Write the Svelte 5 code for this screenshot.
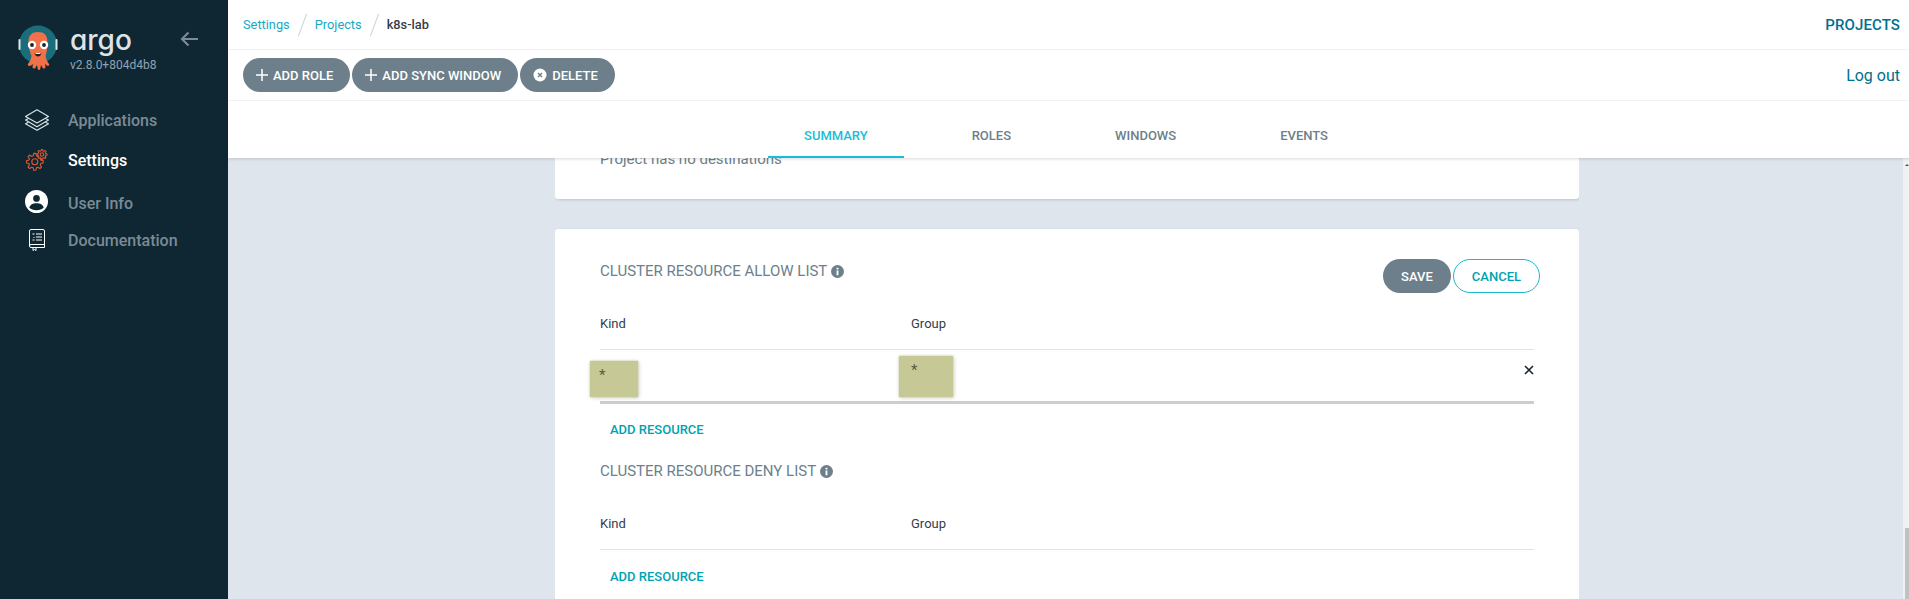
<script lang="ts">
  const menu = [
    { label: 'Applications', icon: 'layers' },
    { label: 'Settings', icon: 'gears', active: true },
    { label: 'User Info', icon: 'user' },
    { label: 'Documentation', icon: 'book' },
  ];
  const tabs = ['Summary', 'Roles', 'Windows', 'Events'];

  // Outline of a cog, so both gears of the settings icon share one shape.
  function cog(cx: number, cy: number, outer: number, inner: number, teeth: number): string {
    const pts: string[] = [];
    const step = (Math.PI * 2) / teeth;
    for (let i = 0; i < teeth; i++) {
      const a = i * step - Math.PI / 2;
      const corners: [number, number][] = [
        [inner, a - step * 0.34],
        [outer, a - step * 0.16],
        [outer, a + step * 0.16],
        [inner, a + step * 0.34],
      ];
      for (const [r, t] of corners) {
        pts.push(`${(cx + r * Math.cos(t)).toFixed(2)} ${(cy + r * Math.sin(t)).toFixed(2)}`);
      }
    }
    return 'M' + pts.join('L') + 'z';
  }
</script>

<div class="page">
  <aside class="sidebar">
    <div class="brand">
      <svg class="logo" viewBox="0 0 40 50" width="40" height="50" aria-hidden="true">
        <circle cx="20" cy="19.500" r="19" fill="#1b6d7c" />
        <rect x="0.500" y="14" width="2" height="11" rx="1" fill="#dfe7ea" />
        <rect x="37.500" y="14" width="2" height="11" rx="1" fill="#dfe7ea" />
        <path d="M10.500 17C10.500 10 14 7 20 7s9.500 3 9.500 10c0 7-1 11-2 14 .5 3 2 6 3.500 8 .8 1.500-.7 2.500-2.200 1.500l-1.800-1.500.5 3c0 1.500-1.800 2-2.800 1l-1.700-3-.8 4c-.4 1.200-2 1.200-2.400 0l-.8-4-1.700 3c-1 1-2.800.5-2.800-1l.5-3-1.800 1.500C10.700 41.500 9.200 40.500 10 39c1.500-2 3-5 3.500-8-1-3-3-7-3-14z" fill="#f0714a" />
        <circle cx="14" cy="20" r="4.200" fill="#fff" />
        <circle cx="26" cy="20" r="4.200" fill="#fff" />
        <circle cx="14" cy="20" r="1.900" fill="#16232b" />
        <circle cx="26" cy="20" r="1.900" fill="#16232b" />
        <path d="M16.500 28h7c-.5 2.500-2 3.500-3.500 3.500s-3-1-3.500-3.500z" fill="#16232b" />
        <path d="M17.500 28h5v1h-5z" fill="#fff" />
      </svg>
      <div class="brand-text">
        <div class="wordmark">argo</div>
        <div class="version">v2.8.0+804d4b8</div>
      </div>
      <svg class="collapse" viewBox="0 0 18 16" width="18" height="16" fill="none" stroke="#7b8b95" stroke-width="2.200" aria-hidden="true">
        <path d="M18 8H2M8.500 1.500 2 8l6.500 6.500" />
      </svg>
    </div>

    <nav class="menu">
      {#each menu as item}
        <div class="menu-item item-{item.icon}" class:active={item.active}>
          <span class="menu-icon">
            {#if item.icon === 'layers'}
              <svg viewBox="0 0 24 22" width="24" height="22" fill="none" stroke="#dbe5ea" stroke-width="1.100" stroke-linejoin="round" aria-hidden="true">
                <path d="M12 .8 23.500 7.500 12 14 .5 7.500z" />
                <path d="M3.500 9.500 .5 11 12 17.800 23.500 11 20.500 9.500" />
                <path d="M3.500 13.200 .5 14.700 12 21.300 23.500 14.700 20.500 13.200" />
              </svg>
            {:else if item.icon === 'gears'}
              <svg viewBox="0 0 22 22" width="22" height="22" fill="none" stroke="#e2572f" stroke-width="1.100" stroke-linejoin="round" aria-hidden="true">
                <path d={cog(8.800, 12.800, 8.500, 6.200, 8)} />
                <circle cx="8.800" cy="12.800" r="3" />
                <path d={cog(16, 5.500, 5, 3.700, 8)} fill="#0f2733" />
                <circle cx="16" cy="5.500" r="1.700" />
              </svg>
            {:else if item.icon === 'user'}
              <svg class="user-icon" viewBox="0 0 24 24" width="23" height="23" aria-hidden="true">
                <circle cx="12" cy="12" r="12" fill="#fff" />
                <circle cx="12" cy="8.800" r="3.500" fill="#0f2733" />
                <path d="M4.500 18.500c.5-3.500 4-4.800 7.500-4.800s7 1.300 7.500 4.800c-1.800 1.700-4.200 2.500-7.500 2.500s-5.700-.8-7.500-2.500z" fill="#0f2733" />
              </svg>
            {:else}
              <svg viewBox="0 0 16 22" width="16" height="22" fill="none" stroke="#fff" stroke-width="1" aria-hidden="true">
                <path d="M2 .5h12A1.500 1.500 0 0 1 15.500 2v16.500H2A1.500 1.500 0 0 1 .5 17V2A1.500 1.500 0 0 1 2 .5z" />
                <path d="M.5 17A1.500 1.500 0 0 1 2 15.500h13.500" />
                <path d="M7 5h6M7 8h6M7 11h6M3.500 5h2M4.500 8.500h1M3.500 11h2" />
                <path d="M4 18.500v3l1.500-1 1.500 1v-3" />
              </svg>
            {/if}
          </span>
          <span class="menu-label">{item.label}</span>
        </div>
      {/each}
    </nav>
  </aside>

  <main class="main">
    <header class="header">
      <div class="crumbs-row">
        <div class="crumbs">
          <a href="#settings">Settings</a>
          <i class="sep"></i>
          <a href="#projects">Projects</a>
          <i class="sep"></i>
          <span class="current">k8s-lab</span>
        </div>
        <span class="title">PROJECTS</span>
      </div>
      <div class="tools-row">
        <div class="tools">
          <button class="btn">
            <svg viewBox="0 0 12 12" width="12" height="12" stroke="#fff" stroke-width="1.500" aria-hidden="true"><path d="M6 0v12M0 6h12" /></svg>
            ADD ROLE
          </button>
          <button class="btn">
            <svg viewBox="0 0 12 12" width="12" height="12" stroke="#fff" stroke-width="1.500" aria-hidden="true"><path d="M6 0v12M0 6h12" /></svg>
            ADD SYNC WINDOW
          </button>
          <button class="btn">
            <svg viewBox="0 0 14 14" width="14" height="14" aria-hidden="true">
              <circle cx="7" cy="7" r="6.500" fill="#fff" />
              <path d="M5 5l4 4M9 5l-4 4" stroke="#6d7f8b" stroke-width="1.400" />
            </svg>
            DELETE
          </button>
        </div>
        <a class="logout" href="#logout">Log out</a>
      </div>
      <div class="tabs">
        {#each tabs as tab, i}
          <div class="tab" class:selected={i === 0}>{tab.toUpperCase()}</div>
        {/each}
      </div>
    </header>

    <div class="content">
      <section class="card card-clipped">
        <p class="empty">Project has no destinations</p>
      </section>

      <section class="card">
        <div class="card-head">
          <h4>CLUSTER RESOURCE ALLOW LIST <svg class="info" viewBox="0 0 14 14" width="13" height="13" aria-hidden="true"><circle cx="7" cy="7" r="7" fill="#6d7f8b" /><path d="M7 3v1.800M7 6v5" stroke="#fff" stroke-width="2" /></svg></h4>
          <div class="card-actions">
            <button class="btn btn-save">SAVE</button>
            <button class="btn btn-outline">CANCEL</button>
          </div>
        </div>
        <div class="cols cols-head"><span>Kind</span><span>Group</span></div>
        <div class="cols cols-edit">
          <span class="mark mark-kind">*</span>
          <span class="mark mark-group">*</span>
          <svg class="remove" viewBox="0 0 10 10" width="10" height="10" stroke="#16232b" stroke-width="1.600" aria-hidden="true"><path d="M1 1l8 8M9 1l-8 8" /></svg>
        </div>
        <button class="add">ADD RESOURCE</button>

        <h4 class="second">CLUSTER RESOURCE DENY LIST <svg class="info" viewBox="0 0 14 14" width="13" height="13" aria-hidden="true"><circle cx="7" cy="7" r="7" fill="#6d7f8b" /><path d="M7 3v1.800M7 6v5" stroke="#fff" stroke-width="2" /></svg></h4>
        <div class="cols cols-head"><span>Kind</span><span>Group</span></div>
        <button class="add">ADD RESOURCE</button>
      </section>
    </div>

    <div class="scrollbar"><span class="arrow"></span><span class="thumb"></span></div>
  </main>
</div>

<style>
  :global(body) {
    margin: 0;
    overflow: hidden;
    font-family: Roboto, 'Liberation Sans', sans-serif;
  }

  .page {
    display: flex;
    width: 1909px;
    height: 599px;
    overflow: hidden;
    background: #dee5ec;
  }

  .sidebar {
    flex: none;
    width: 228px;
    background: #0f2733;
    box-sizing: border-box;
    padding-top: 25px;
  }

  .brand {
    display: flex;
    align-items: flex-start;
    padding-left: 18px;
    height: 76px;
  }
  .logo {
    flex: none;
  }
  .brand-text {
    margin-left: 12px;
    width: 110px;
  }
  .wordmark {
    font-family: Inter, 'Open Sans', sans-serif;
    font-feature-settings: 'cv11' 1;
    font-size: 28px;
    font-weight: 500;
    line-height: 30px;
    color: #dfe3e6;
  }
  .version {
    margin-top: 2px;
    font-size: 12px;
    line-height: 16px;
    color: #8fa4b1;
  }
  .collapse {
    margin-top: 6px;
  }

  .menu {
    margin-top: -1px;
  }
  .menu-item {
    display: flex;
    align-items: center;
    height: 40px;
    color: #7b8b95;
    font-size: 16px;
    font-weight: 500;
  }
  .menu-item.active {
    color: #fff;
  }
  .item-user {
    margin-top: 3px;
  }
  .item-book {
    height: 34px;
  }
  .user-icon {
    margin-top: -4px;
  }
  .menu-icon {
    flex: none;
    width: 68px;
    display: flex;
    justify-content: center;
    padding-left: 5px;
    box-sizing: border-box;
  }

  .main {
    position: relative;
    flex: 1;
    min-width: 0;
    display: flex;
    flex-direction: column;
  }

  .header {
    position: relative;
    z-index: 2;
    flex: none;
    background: #fff;
    box-shadow: 1px 1px 3px rgba(0, 0, 0, 0.15);
  }
  .crumbs-row {
    display: flex;
    align-items: center;
    justify-content: space-between;
    height: 49px;
    padding: 0 9px 0 15px;
    border-bottom: 1px solid #eff3f5;
  }
  .crumbs {
    display: flex;
    align-items: center;
    font-size: 12.800px;
  }
  .crumbs a {
    color: #18a9c4;
    text-decoration: none;
  }
  .current {
    color: #363c4a;
    font-weight: 500;
  }
  .sep {
    width: 1px;
    height: 24px;
    margin: 0 12px;
    background: #ccd6dd;
    transform: rotate(20deg);
  }
  .title {
    color: #00708e;
    font-size: 15px;
    font-weight: 500;
    letter-spacing: 0.1px;
  }
  .tools-row {
    display: flex;
    align-items: center;
    justify-content: space-between;
    height: 50px;
    padding: 0 9px 0 15px;
    border-bottom: 1px solid #eff3f5;
  }
  .tools {
    display: flex;
    gap: 2px;
  }
  .logout {
    color: #00708e;
    font-size: 16px;
    text-decoration: none;
  }

  .btn {
    display: inline-flex;
    align-items: center;
    gap: 5px;
    height: 34px;
    padding: 0 17px 0 13px;
    border: 0;
    border-radius: 17px;
    background: #6d7f8b;
    color: #fff;
    font: 500 13px Roboto, sans-serif;
    cursor: pointer;
  }
  .btn-save {
    padding: 0 18px;
  }
  .btn-outline {
    padding: 0 18px;
    background: #fff;
    border: 1px solid #1ab8cf;
    color: #00a2b3;
  }

  .tabs {
    display: flex;
    justify-content: center;
    gap: 32px;
    height: 57px;
    padding-right: 5px;
  }
  .tab {
    box-sizing: border-box;
    padding: 27px 36px 0;
    text-align: center;
    color: #6d7f8b;
    font-size: 13px;
    font-weight: 500;
  }
  .tab.selected {
    color: #18bed4;
    border-bottom: 2px solid #18bed4;
  }

  .content {
    flex: 1;
    min-height: 0;
    width: 1024px;
    margin-left: 327px;
    overflow: hidden;
  }
  .card {
    position: relative;
    box-sizing: border-box;
    background: #fff;
    border-radius: 3px;
    box-shadow: 1px 1px 3px rgba(0, 0, 0, 0.15);
    padding: 28px 45px 0 45px;
    margin-bottom: 30px;
    height: 400px;
  }
  .card-clipped {
    height: 41px;
    padding-top: 0;
    border-radius: 0 0 3px 3px;
    overflow: hidden;
  }
  .empty {
    margin: -8px 0 0;
    color: #6d7f8b;
    font-size: 15px;
    line-height: 18px;
  }

  .card-head {
    display: flex;
    justify-content: space-between;
    align-items: flex-start;
    margin-right: -6px;
    height: 59px;
  }
  h4 {
    margin: 5px 0 0;
    color: #6d7f8b;
    font-size: 15px;
    font-weight: 400;
    line-height: 18px;
  }
  .info {
    vertical-align: -2px;
  }
  .card-actions {
    display: flex;
    gap: 2px;
    margin-top: 2px;
  }

  .cols {
    display: grid;
    grid-template-columns: 311px 1fr;
    font-size: 13px;
    color: #363c4a;
  }
  .cols-head {
    height: 33px;
    line-height: 16px;
    border-bottom: 1px solid #dee6eb;
  }
  .cols-edit {
    position: relative;
    height: 51px;
    border-bottom: 3px solid #c9ced2;
  }
  .mark {
    position: absolute;
    bottom: 4px;
    box-sizing: border-box;
    padding: 5px 0 0 9px;
    background: #c6c996;
    color: #5a5e33;
    font-size: 15px;
    box-shadow: 0 0 2px rgba(198, 201, 150, 0.9), 1px 1px 4px rgba(0, 0, 0, 0.18);
  }
  .mark-kind {
    left: -10px;
    width: 48px;
    height: 36px;
  }
  .mark-group {
    left: 299px;
    width: 54px;
    height: 41px;
    padding-left: 12px;
  }
  .remove {
    position: absolute;
    right: 0;
    top: 15px;
  }
  .add {
    display: block;
    height: 16px;
    margin: 18px 0 0 10px;
    padding: 0;
    border: 0;
    background: none;
    color: #00a2b3;
    font: 500 13px/16px Roboto, sans-serif;
    cursor: pointer;
  }
  .cols-head + .add {
    margin-top: 19px;
  }
  .second {
    margin-top: 24px;
    height: 54px;
  }

  .scrollbar {
    position: absolute;
    z-index: 1;
    top: 158px;
    right: 0;
    bottom: 0;
    width: 6px;
    background: #f1f1f1;
  }
  .arrow {
    position: absolute;
    top: 6px;
    left: 2px;
    border: 2px solid transparent;
    border-bottom-color: #505050;
    border-top: 0;
  }
  .thumb {
    position: absolute;
    left: 2px;
    right: 0;
    bottom: 0;
    height: 71px;
    background: #c1c1c1;
  }
</style>
